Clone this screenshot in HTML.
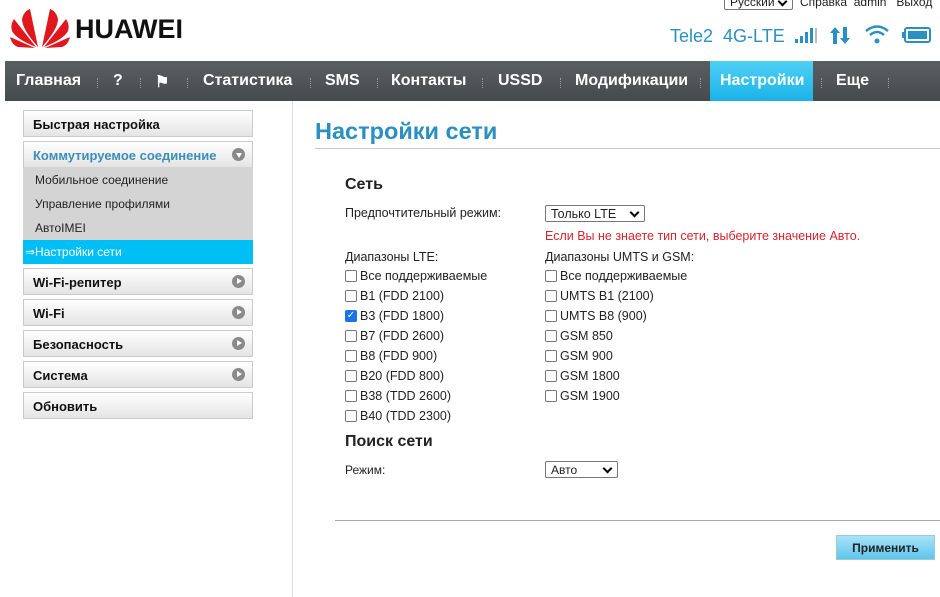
<!DOCTYPE html>
<html><head><meta charset="utf-8"><style>
*{margin:0;padding:0;box-sizing:border-box}
body{width:940px;height:597px;overflow:hidden;background:#fff;font-family:"Liberation Sans",Arial,sans-serif;position:relative;color:#222}
.a{position:absolute;white-space:nowrap}
.nav{position:absolute;left:5px;top:61px;width:935px;height:40px;background:linear-gradient(#5a6062,#454a4c);}
.nav span{position:absolute;top:11px;color:#fff;font-weight:bold;font-size:16px}
.sep{position:absolute;top:17px;width:2px;height:10px;border-left:1px dotted #999}
.it{position:absolute;left:23px;width:230px;height:27px;border:1px solid #ccc;background:linear-gradient(#fff,#e4e4e4);font-weight:bold;font-size:13px;padding:6px 0 0 9px;color:#111}
.arr{position:absolute;right:7px;top:6px;width:13px;height:13px;border-radius:50%;background:#8a8a8a}
.arr:after{content:"";position:absolute;left:5px;top:3px;border-left:5px solid #fff;border-top:3.5px solid transparent;border-bottom:3.5px solid transparent}
.sub{position:absolute;left:35px;font-size:12px;color:#222}
.cb{position:absolute;font-size:12.5px;color:#222;height:14px;line-height:14px}
.cb i{display:inline-block;width:12px;height:12px;border:1px solid #777;border-radius:2px;vertical-align:top;margin:1px 3px 0 0;background:#fff}
.sel{position:absolute;border:1px solid #777;border-radius:2px;font-size:12.5px;padding:1px 0 0 5px;height:17px;background:#fff}
.sel:after{content:"";position:absolute;right:6px;top:3px;width:5px;height:5px;border-right:2px solid #000;border-bottom:2px solid #000;transform:rotate(45deg)}
</style></head><body>
<div class="sel" style="left:724px;top:-6px;width:69px;height:16px;font-size:12px;padding-top:0">Русский</div>
<div class="a" style="left:800px;top:-5px;font-size:12px;color:#222">Справка&nbsp;&nbsp;admin&nbsp;&nbsp;&nbsp;Выход</div>
<svg class="a" style="left:10px;top:5px" width="60" height="44" viewBox="0 0 60 44">
<g fill="#e0181e">
<path d="M28 42 L20 4 Q14 6 12 14 Q12 24 28 42Z"/>
<path d="M32 42 L40 4 Q46 6 48 14 Q48 24 32 42Z"/>
<path d="M26 42 L4 14 Q0 20 2 26 Q6 34 26 42Z"/>
<path d="M34 42 L56 14 Q60 20 58 26 Q54 34 34 42Z"/>
<path d="M25 43 L0 32 Q2 40 8 42Z"/>
<path d="M35 43 L60 32 Q58 40 52 42Z"/>
</g></svg>
<div class="a" style="left:75px;top:14px;font-size:27px;font-weight:bold;color:#111">HUAWEI</div>
<div class="a" style="left:670px;top:26px;font-size:18px;color:#2a90c2">Tele2&nbsp;&nbsp;4G-LTE</div>
<svg class="a" style="left:795px;top:24px" width="140" height="24">
<g fill="#2a90c2"><rect x="0" y="15" width="3" height="4"/><rect x="5" y="12" width="3" height="7"/><rect x="10" y="8" width="3" height="11"/><rect x="15" y="4" width="3" height="15"/><rect x="20" y="4" width="2" height="15" fill="#bbb"/>
<path d="M40 3 L35 9 H38 V20 H42 V9 H45Z"/><path d="M50 20 L45 14 H48 V3 H52 V14 H55Z"/>
<circle cx="82" cy="17" r="2.5"/></g>
<g fill="none" stroke="#2a90c2" stroke-width="2.5"><path d="M75 11 Q82 5 89 11"/><path d="M71 7 Q82 -2 93 7"/></g>
<rect x="110" y="4" width="25" height="14" rx="2" fill="none" stroke="#2a90c2" stroke-width="2"/><rect x="107" y="8" width="3" height="6" fill="#2a90c2"/><rect x="113" y="7" width="19" height="8" fill="#2a90c2"/>
</svg>
<div class="nav">
<span style="left:11px">Главная</span><div class="sep" style="left:92px"></div>
<span style="left:108px">?</span><div class="sep" style="left:135px"></div>
<span style="left:150px">&#9873;</span><div class="sep" style="left:182px"></div>
<span style="left:198px">Статистика</span><div class="sep" style="left:305px"></div>
<span style="left:320px">SMS</span><div class="sep" style="left:372px"></div>
<span style="left:386px">Контакты</span><div class="sep" style="left:477px"></div>
<span style="left:493px">USSD</span><div class="sep" style="left:555px"></div>
<span style="left:570px">Модификации</span><div class="sep" style="left:695px"></div>
<div style="position:absolute;left:705px;top:0;width:103px;height:40px;background:linear-gradient(#4fd0f5,#1ab3e8)"></div>
<span style="left:715px">Настройки</span><div class="sep" style="left:816px"></div>
<span style="left:831px">Еще</span><div class="sep" style="left:883px"></div>
</div>
<div class="it" style="top:110px">Быстрая настройка</div>
<div class="it" style="top:141px;color:#3d8fb8">Коммутируемое соединение<div class="arr" style="transform:rotate(90deg)"></div></div>
<div class="a" style="left:23px;top:167px;width:230px;height:73px;background:#d4d4d4"></div>
<div class="sub" style="top:173px">Мобильное соединение</div>
<div class="sub" style="top:197px">Управление профилями</div>
<div class="sub" style="top:221px">АвтоIMEI</div>
<div class="a" style="left:23px;top:240px;width:230px;height:24px;background:#00bff5;color:#fff;font-size:12px;padding:5px 0 0 2px">&#8658;Настройки сети</div>
<div class="it" style="top:268px">Wi-Fi-репитер<div class="arr"></div></div>
<div class="it" style="top:299px">Wi-Fi<div class="arr"></div></div>
<div class="it" style="top:330px">Безопасность<div class="arr"></div></div>
<div class="it" style="top:361px">Система<div class="arr"></div></div>
<div class="it" style="top:392px">Обновить</div>
<div class="a" style="left:292px;top:101px;width:1px;height:496px;background:#ddd"></div>
<div class="a" style="left:315px;top:118px;font-size:23.5px;font-weight:bold;color:#2a90c2">Настройки сети</div>
<div class="a" style="left:315px;top:148px;width:625px;height:1px;background:#ccc"></div>
<div class="a" style="left:345px;top:176px;font-size:16px;font-weight:bold">Сеть</div>
<div class="a" style="left:345px;top:206px;font-size:12.5px">Предпочтительный режим:</div>
<div class="sel" style="left:545px;top:205px;width:100px">Только LTE</div>
<div class="a" style="left:545px;top:229px;font-size:12.5px;color:#d9232c">Если Вы не знаете тип сети, выберите значение Авто.</div>
<div class="a" style="left:345px;top:250px;font-size:12.5px">Диапазоны LTE:</div>
<div class="a" style="left:545px;top:250px;font-size:12.5px">Диапазоны UMTS и GSM:</div>
<div class="cb" style="left:345px;top:269px"><i></i>Все поддерживаемые</div>
<div class="cb" style="left:345px;top:289px"><i></i>B1 (FDD 2100)</div>
<div class="cb" style="left:345px;top:309px"><i style="background:#1a73e8;border-color:#1a73e8;color:#fff;font-size:10px;font-style:normal;text-align:center;line-height:10px">&#10003;</i>B3 (FDD 1800)</div>
<div class="cb" style="left:345px;top:329px"><i></i>B7 (FDD 2600)</div>
<div class="cb" style="left:345px;top:349px"><i></i>B8 (FDD 900)</div>
<div class="cb" style="left:345px;top:369px"><i></i>B20 (FDD 800)</div>
<div class="cb" style="left:345px;top:389px"><i></i>B38 (TDD 2600)</div>
<div class="cb" style="left:345px;top:409px"><i></i>B40 (TDD 2300)</div>
<div class="cb" style="left:545px;top:269px"><i></i>Все поддерживаемые</div>
<div class="cb" style="left:545px;top:289px"><i></i>UMTS B1 (2100)</div>
<div class="cb" style="left:545px;top:309px"><i></i>UMTS B8 (900)</div>
<div class="cb" style="left:545px;top:329px"><i></i>GSM 850</div>
<div class="cb" style="left:545px;top:349px"><i></i>GSM 900</div>
<div class="cb" style="left:545px;top:369px"><i></i>GSM 1800</div>
<div class="cb" style="left:545px;top:389px"><i></i>GSM 1900</div>
<div class="a" style="left:345px;top:433px;font-size:16px;font-weight:bold">Поиск сети</div>
<div class="a" style="left:345px;top:463px;font-size:12px">Режим:</div>
<div class="sel" style="left:545px;top:461px;width:73px;font-size:12px">Авто</div>
<div class="a" style="left:335px;top:520px;width:605px;height:1px;background:#aaa"></div>
<div class="a" style="left:836px;top:535px;width:99px;height:25px;border:1px solid #9cc;background:linear-gradient(#a9e2f8,#5ec6ee);font-size:12px;font-weight:bold;text-align:center;padding-top:5px;color:#222">Применить</div>
</body></html>
